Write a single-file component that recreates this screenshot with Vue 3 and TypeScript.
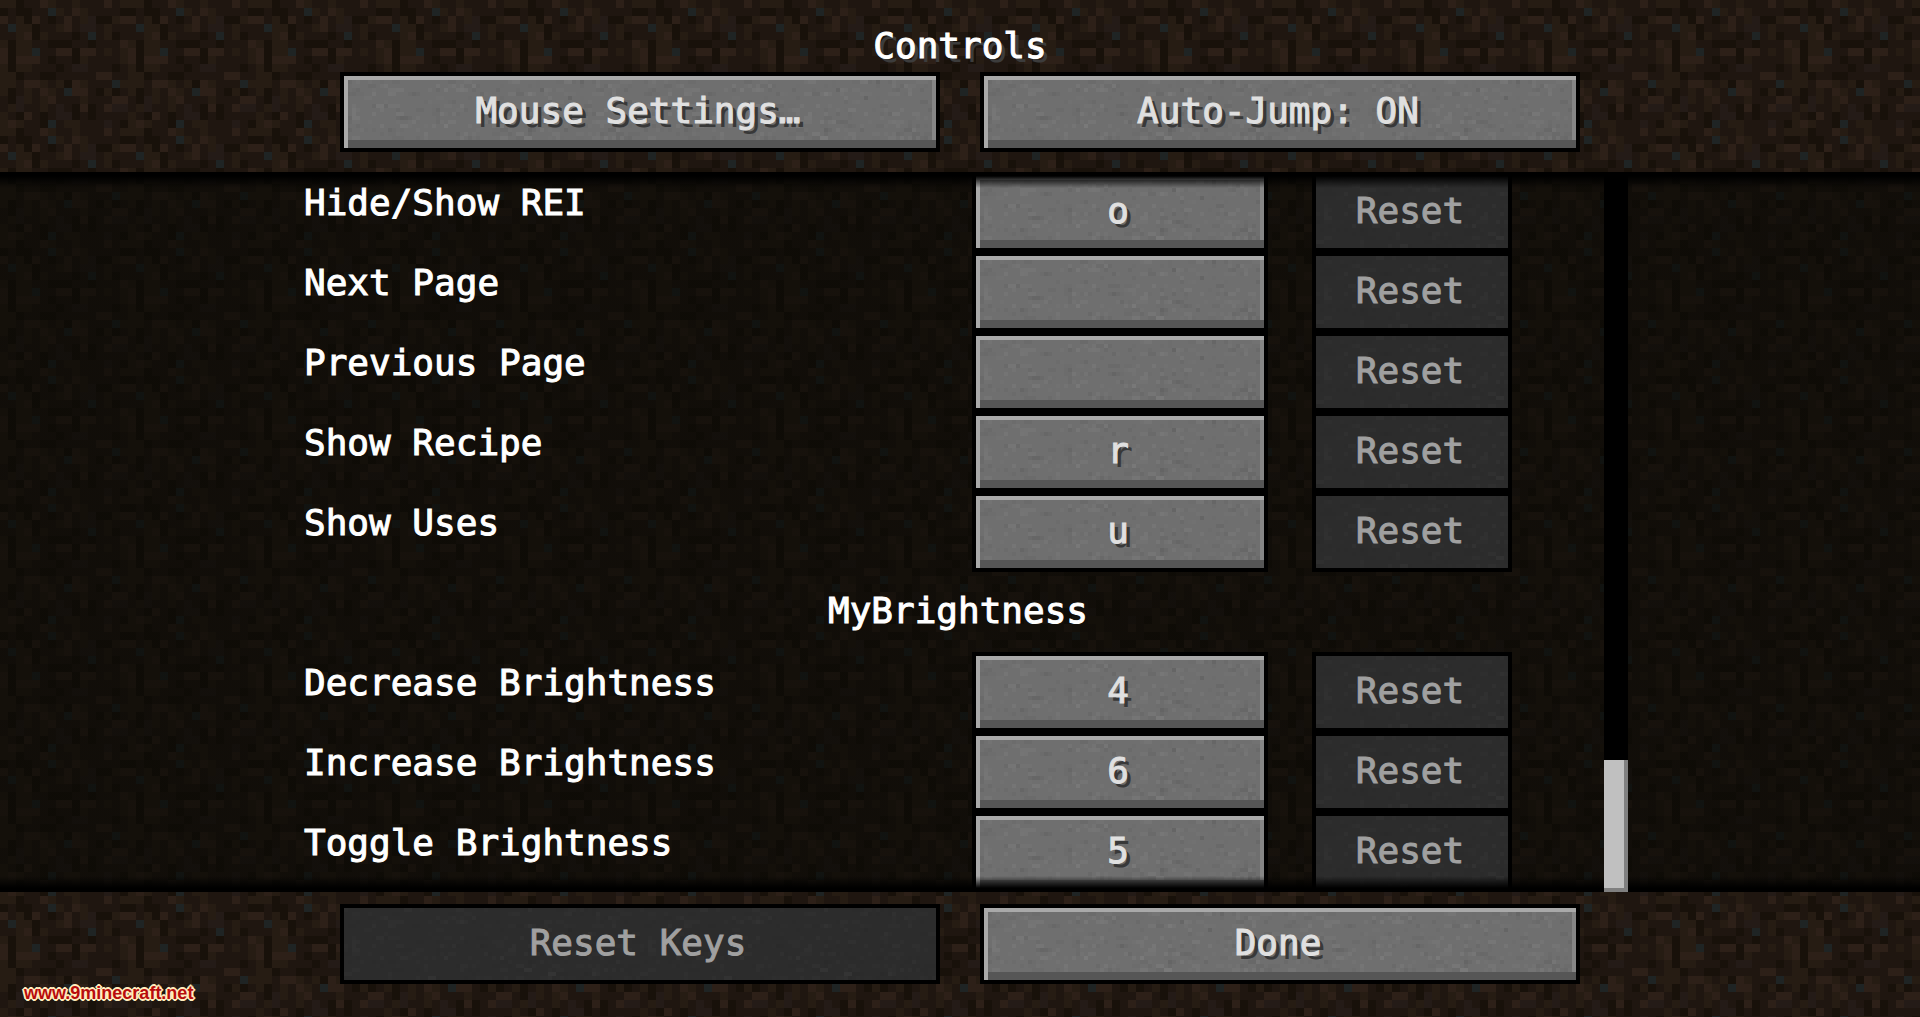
<script setup lang="ts">
import { computed, ref } from 'vue'

interface Binding {
  id: string
  name: string
  key: string
}

interface Category {
  title: string
  bindings: Binding[]
}

const autoJump = ref(true)

const categories = ref<Category[]>([
  {
    title: '',
    bindings: [
      { id: 'rei-hide', name: 'Hide/Show REI', key: 'o' },
      { id: 'rei-next', name: 'Next Page', key: '' },
      { id: 'rei-previous', name: 'Previous Page', key: '' },
      { id: 'rei-recipe', name: 'Show Recipe', key: 'r' },
      { id: 'rei-uses', name: 'Show Uses', key: 'u' },
    ],
  },
  {
    title: 'MyBrightness',
    bindings: [
      { id: 'bright-down', name: 'Decrease Brightness', key: '4' },
      { id: 'bright-up', name: 'Increase Brightness', key: '6' },
      { id: 'bright-toggle', name: 'Toggle Brightness', key: '5' },
    ],
  },
])

// Dirt block, one letter per texel
const dirt: string[] = [
  'bbdmmlbmmbmmmlmb',
  'dmddmmkbmlbmmmmd',
  'lmbdlmdmlmbgddbl',
  'mkbbdmmblmggmbmm',
  'mmbldbmmmdmkmbdm',
  'bdbbmmdddmmdmmml',
  'ldbbkmmlldllmbmb',
  'ldlllmdmmdbmmmmb',
  'bdbbmmmdmggmmmdm',
  'bbdmmddmmmmmllmm',
  'bbmllbmbdlbmmmkb',
  'bdmbmlbmkllmdbdm',
  'mdgbmblmmmbmmmll',
  'mbgmmbmgmdldmlgg',
  'bmdlmdmggdmdmmmm',
  'blbmmdkmbbmmmgmd',
]

const palette: Record<string, string> = {
  d: '#18110a',
  m: '#1f1610',
  g: '#241b17',
  b: '#261c13',
  l: '#2d2018',
  k: '#1f2424',
}

function svgUrl(width: number, height: number, body: string): string {
  const svg = `<svg xmlns="http://www.w3.org/2000/svg" width="${width}" height="${height}" shape-rendering="crispEdges">${body}</svg>`
  return `url("data:image/svg+xml,${encodeURIComponent(svg)}")`
}

const dirtTexture = svgUrl(
  128,
  128,
  dirt
    .flatMap((row, y) =>
      [...row].map(
        (c, x) => `<rect x="${x * 8}" y="${y * 8}" width="8" height="8" fill="${palette[c]}"/>`,
      ),
    )
    .join(''),
)

// Faint stone grain for the buttons
function grain(strength: number): string {
  let seed = 7
  const next = (): number => {
    seed = (seed * 16807) % 2147483647
    return seed / 2147483647
  }
  let body = ''
  for (let i = 0; i < 380; i++) {
    const x = Math.floor(next() * 74) * 4
    const y = Math.floor(next() * 18) * 4
    const w = next() < 0.4 ? 8 : 4
    const fill = next() < 0.5 ? '#fff' : '#000'
    const alpha = (strength * (0.2 + next() * 0.8)).toFixed(3)
    body += `<rect x="${x}" y="${y}" width="${w}" height="4" fill="${fill}" fill-opacity="${alpha}"/>`
  }
  return svgUrl(296, 72, body)
}

const textures = {
  '--dirt': dirtTexture,
  '--grain': grain(0.05),
  '--grain-dim': grain(0.02),
}

const autoJumpLabel = computed(() => `Auto-Jump: ${autoJump.value ? 'ON' : 'OFF'}`)
</script>

<template>
  <main class="screen" :style="textures">
    <header class="top">
      <h1 class="title">Controls</h1>
      <div class="pair">
        <button type="button" class="btn">Mouse Settings…</button>
        <button type="button" class="btn" @click="autoJump = !autoJump">{{ autoJumpLabel }}</button>
      </div>
    </header>

    <section class="panel">
      <div class="list">
        <template v-for="category in categories" :key="category.title">
          <h2 v-if="category.title" class="category">{{ category.title }}</h2>
          <div v-for="binding in category.bindings" :key="binding.id" class="row">
            <label class="name" :for="binding.id">{{ binding.name }}</label>
            <button :id="binding.id" type="button" class="btn">{{ binding.key }}</button>
            <button type="button" class="btn" disabled>Reset</button>
          </div>
        </template>
      </div>
      <div class="track" role="scrollbar" aria-label="Key bindings" aria-valuenow="100">
        <div class="thumb"></div>
      </div>
    </section>

    <footer class="bottom">
      <div class="pair">
        <button type="button" class="btn" disabled>Reset Keys</button>
        <button type="button" class="btn">Done</button>
      </div>
      <a class="mark" href="#">www.9minecraft.net</a>
    </footer>
  </main>
</template>

<style>
body {
  background: #20160f;
}
</style>

<style scoped>
.screen {
  display: flex;
  flex-direction: column;
  min-height: 100vh;
  color: #fff;
  font-family: "DejaVu Sans Mono", "Liberation Mono", monospace;
  font-size: 36px;
  line-height: 40px;
  -webkit-text-stroke: 1px currentColor;
}

.top {
  padding: 26px 0 20px;
  background: var(--dirt);
}

.title,
.category {
  margin: 0;
  font-size: 36px;
  font-weight: 400;
  text-align: center;
}

.title {
  margin-bottom: 6px;
  text-shadow: 4px 4px #3c3c3c;
}

.pair {
  display: grid;
  grid-template-columns: 1fr 1fr;
  gap: 40px;
  width: 1240px;
  max-width: 100%;
  margin: 0 auto;
}

.btn {
  box-sizing: border-box;
  height: 80px;
  margin: 0;
  padding: 0 4px 2px 0;
  border: 4px solid #000;
  border-radius: 0;
  background: var(--grain) #6f6f6f;
  box-shadow:
    inset 4px 0 #a9a9a9,
    inset 0 4px #a9a9a9,
    inset 0 -8px #565656,
    inset -4px 0 #868686;
  color: #e0e0e0;
  font: inherit;
  text-align: center;
  text-shadow: 4px 4px #383838;
}

.btn:disabled {
  background: var(--grain-dim) #2c2c2c;
  box-shadow: none;
  color: #a0a0a0;
  text-shadow: none;
}

.panel {
  position: relative;
  display: flex;
  padding-left: calc(50% - 656px);
  background:
    linear-gradient(rgba(8, 8, 4, 0.6), rgba(8, 8, 4, 0.6)),
    var(--dirt) 0 -60px;
}

.panel::before,
.panel::after {
  content: "";
  position: absolute;
  left: 0;
  right: 0;
  height: 16px;
  pointer-events: none;
}

.panel::before {
  top: 0;
  background: linear-gradient(#000 4px, transparent);
}

.panel::after {
  bottom: 0;
  background: linear-gradient(transparent, #000 12px);
}

.list {
  width: 1208px;
}

.row {
  display: grid;
  grid-template-columns: 1fr 296px 200px;
  column-gap: 44px;
  height: 80px;
}

.name {
  padding-top: 11px;
}

.category {
  box-sizing: border-box;
  height: 80px;
  padding: 19px 0 0 100px;
}

.track {
  position: relative;
  z-index: 1;
  display: flex;
  flex-direction: column;
  justify-content: flex-end;
  width: 24px;
  margin-left: 92px;
  background: #000;
}

.thumb {
  height: 132px;
  background: #c0c0c0;
  box-shadow: inset -4px -4px #808080;
}

.bottom {
  position: relative;
  flex: 1;
  padding: 12px 0 33px;
  background: var(--dirt) 0 4px;
}

.mark {
  position: absolute;
  left: 24px;
  bottom: 12px;
  color: #b80c0c;
  font-family: "Liberation Sans", sans-serif;
  font-size: 18px;
  font-weight: 700;
  line-height: 24px;
  text-decoration: none;
  -webkit-text-stroke: 0;
  text-shadow:
    2px 0 #ffedbe,
    -2px 0 #ffedbe,
    0 2px #ffedbe,
    0 -2px #ffedbe,
    1px 1px #ffedbe,
    -1px 1px #ffedbe,
    1px -1px #ffedbe,
    -1px -1px #ffedbe;
}
</style>
